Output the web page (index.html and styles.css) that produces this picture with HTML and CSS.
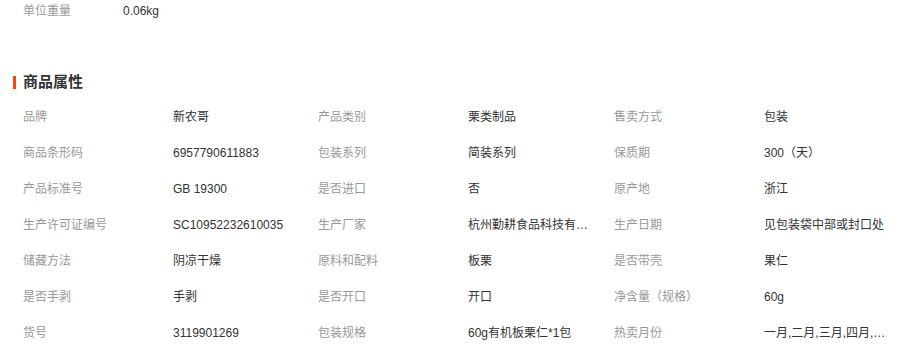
FILE: index.html
```html
<!DOCTYPE html>
<html lang="zh-CN">
<head>
<meta charset="utf-8">
<title>商品属性</title>
<link rel="stylesheet" href="styles.css">
</head>
<body>
<div class="page">
  <div class="top-row">
    <span class="top-label">单位重量</span>
    <span class="top-value">0.06kg</span>
  </div>

  <h2 class="section-title"><span class="bar"></span>商品属性</h2>

  <div class="attrs">
    <div class="label">品牌</div><div class="value">新农哥</div>
    <div class="label">产品类别</div><div class="value">栗类制品</div>
    <div class="label">售卖方式</div><div class="value">包装</div>

    <div class="label">商品条形码</div><div class="value">6957790611883</div>
    <div class="label">包装系列</div><div class="value">简装系列</div>
    <div class="label">保质期</div><div class="value">300（天）</div>

    <div class="label">产品标准号</div><div class="value">GB 19300</div>
    <div class="label">是否进口</div><div class="value">否</div>
    <div class="label">原产地</div><div class="value">浙江</div>

    <div class="label">生产许可证编号</div><div class="value">SC10952232610035</div>
    <div class="label">生产厂家</div><div class="value">杭州勤耕食品科技有限公司</div>
    <div class="label">生产日期</div><div class="value">见包装袋中部或封口处</div>

    <div class="label">储藏方法</div><div class="value">阴凉干燥</div>
    <div class="label">原料和配料</div><div class="value">板栗</div>
    <div class="label">是否带壳</div><div class="value">果仁</div>

    <div class="label">是否手剥</div><div class="value">手剥</div>
    <div class="label">是否开口</div><div class="value">开口</div>
    <div class="label">净含量（规格）</div><div class="value">60g</div>

    <div class="label">货号</div><div class="value">3119901269</div>
    <div class="label">包装规格</div><div class="value">60g有机板栗仁*1包</div>
    <div class="label">热卖月份</div><div class="value">一月,二月,三月,四月,五月,六月</div>
  </div>
</div>
</body>
</html>
```

FILE: styles.css
```css
html, body {
  margin: 0;
  padding: 0;
  background: #ffffff;
}

body {
  font-family: "Liberation Sans", "Noto Sans CJK SC", sans-serif;
  font-size: 12px;
  color: #333333;
}

.page {
  width: 906px;
}

.top-row {
  display: flex;
  height: 22px;
  line-height: 22px;
  padding-left: 23px;
}

.top-label {
  width: 100px;
  color: #999999;
}

.top-value {
  color: #333333;
}

.section-title {
  display: flex;
  align-items: center;
  margin: 50px 0 0 0;
  padding-left: 13px;
  height: 20px;
  line-height: 20px;
  font-size: 15px;
  font-weight: bold;
  color: #333333;
}

.bar {
  display: inline-block;
  width: 3px;
  height: 13px;
  background: #ff4400;
  margin-right: 7px;
}

.attrs {
  display: grid;
  grid-template-columns: 150px 145px 150px 146px 150px 146px;
  grid-auto-rows: 36px;
  padding: 7px 0 0 23px;
  line-height: 36px;
}

.label {
  color: #999999;
  white-space: nowrap;
}

.value {
  color: #333333;
  max-width: 122px;
  white-space: nowrap;
  overflow: hidden;
  text-overflow: ellipsis;
}
```
